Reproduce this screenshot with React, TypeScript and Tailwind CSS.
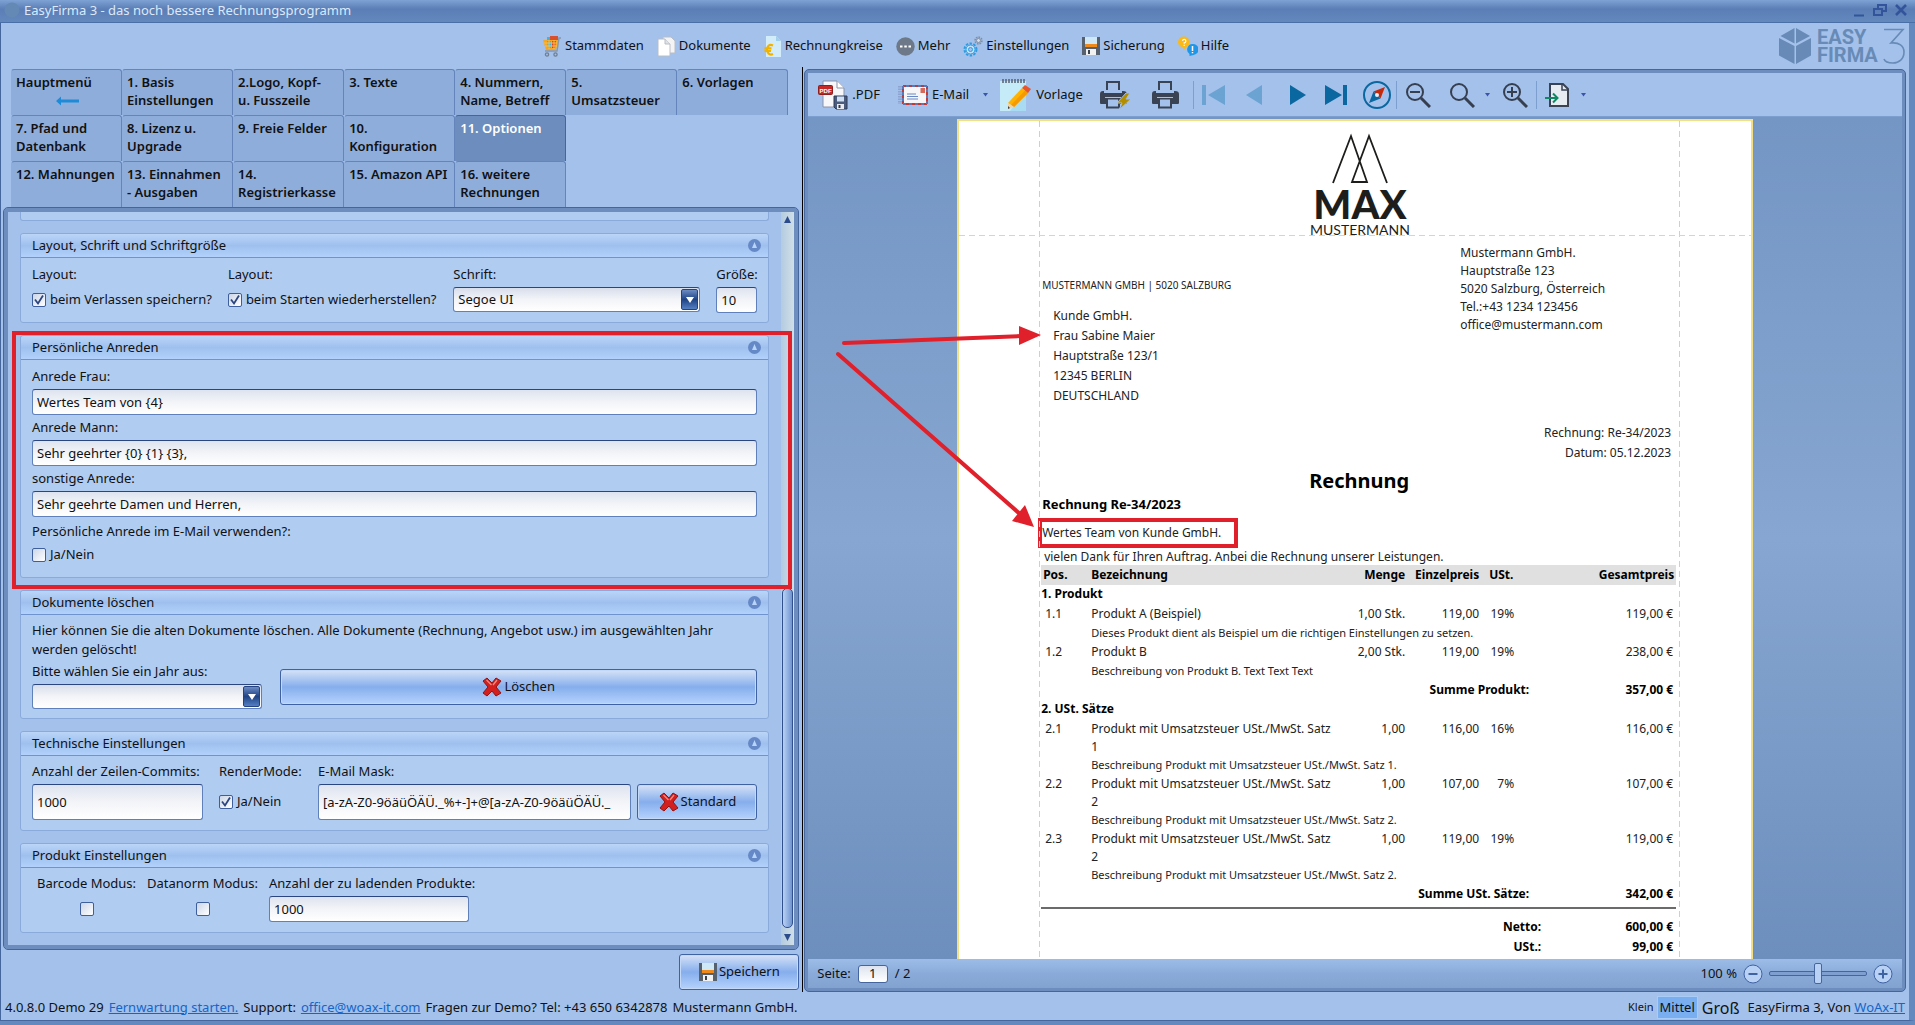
import { useId, useState } from "react";
import type { ReactNode } from "react";

const TAB_ROWS = [
  ["Hauptmenü", "1. Basis Einstellungen", "2.Logo, Kopf-\nu. Fusszeile", "3. Texte", "4. Nummern, Name, Betreff", "5.\nUmsatzsteuer", "6. Vorlagen"],
  ["7. Pfad und Datenbank", "8. Lizenz u. Upgrade", "9. Freie Felder", "10. Konfiguration", "11. Optionen"],
  ["12. Mahnungen", "13. Einnahmen\n- Ausgaben", "14. Registrierkasse", "15. Amazon API", "16. weitere Rechnungen"],
];

type Item = { pos: string; name: string; qty: string; price: string; tax: string; total: string; text: string };
type Group = { title: string; items: Item[]; sumLabel: string; sum: string };

const GROUPS: Group[] = [
  {
    title: "1. Produkt",
    items: [
      { pos: "1.1", name: "Produkt A (Beispiel)", qty: "1,00 Stk.", price: "119,00", tax: "19%", total: "119,00 €", text: "Dieses Produkt dient als Beispiel um die richtigen Einstellungen zu setzen." },
      { pos: "1.2", name: "Produkt B", qty: "2,00 Stk.", price: "119,00", tax: "19%", total: "238,00 €", text: "Beschreibung von Produkt B. Text Text Text" },
    ],
    sumLabel: "Summe Produkt:",
    sum: "357,00 €",
  },
  {
    title: "2. USt. Sätze",
    items: [
      { pos: "2.1", name: "Produkt mit Umsatzsteuer USt./MwSt. Satz 1", qty: "1,00", price: "116,00", tax: "16%", total: "116,00 €", text: "Beschreibung Produkt mit Umsatzsteuer USt./MwSt. Satz 1." },
      { pos: "2.2", name: "Produkt mit Umsatzsteuer USt./MwSt. Satz 2", qty: "1,00", price: "107,00", tax: "7%", total: "107,00 €", text: "Beschreibung Produkt mit Umsatzsteuer USt./MwSt. Satz 2." },
      { pos: "2.3", name: "Produkt mit Umsatzsteuer USt./MwSt. Satz 2", qty: "1,00", price: "119,00", tax: "19%", total: "119,00 €", text: "Beschreibung Produkt mit Umsatzsteuer USt./MwSt. Satz 2." },
    ],
    sumLabel: "Summe USt. Sätze:",
    sum: "342,00 €",
  },
];

/* ---------- icons ---------- */

function CartIcon() {
  return (
    <svg width="20" height="21" viewBox="0 0 20 21">
      <path d="M5 1h7v4H5z" fill="#3fb2e6" />
      <path d="M8 0h8v4H8z" fill="#d9502e" />
      <path d="M1 4h15l-2 10H4z" fill="#f5a623" />
      <path d="M5 5h4v7H6z" fill="#3fb2e6" />
      <path d="M10 5h4l-1 7h-3z" fill="#d9421e" />
      <path d="M2 7h13M3 10h12M7 4v9M12 4v9" stroke="#fbc04a" strokeWidth="1" />
      <path d="M19 2h-2l-2 13H3" fill="none" stroke="#8a97a6" strokeWidth="1.4" />
      <circle cx="5" cy="18.500" r="1.600" fill="none" stroke="#6f7f90" strokeWidth="1.3" />
      <circle cx="13.500" cy="18.500" r="1.600" fill="none" stroke="#6f7f90" strokeWidth="1.3" />
    </svg>
  );
}

function DocsIcon() {
  return (
    <svg width="19" height="21" viewBox="0 0 19 21">
      <path d="M6 1h8l4 4v12H6z" fill="#f4f4f4" stroke="#b9bec6" />
      <path d="M1 3h7l5 5v12H1z" fill="#fff" stroke="#b9bec6" />
      <path d="M8 3v5h5" fill="#dfe3e8" stroke="#b9bec6" />
    </svg>
  );
}

function EuroDocIcon() {
  return (
    <svg width="18" height="21" viewBox="0 0 18 21">
      <path d="M2 0h10l5 5v16H2z" fill="#d3ecfa" />
      <path d="M12 0v5h5z" fill="#9fd0ee" />
      <path d="M9 9.500C5 7.500 3 11 3 13.500S5 20 9 18M0.500 12.300h7M0.500 15h6.500" fill="none" stroke="#f2b300" strokeWidth="2.200" />
    </svg>
  );
}

function MoreIcon() {
  return (
    <svg width="19" height="19" viewBox="0 0 19 19">
      <circle cx="9.500" cy="9.500" r="9.200" fill="#6d7988" />
      <path d="M4 8.500h2.500v2H4zM8.300 8.500h2.500v2H8.300zM12.500 8.500H15v2h-2.500z" fill="#fff" />
    </svg>
  );
}

function GearsIcon() {
  return (
    <svg width="20" height="21" viewBox="0 0 20 21" fill="none">
      <circle cx="7.500" cy="13.500" r="6" stroke="#2f9be0" strokeWidth="2" strokeDasharray="2.400 1.400" />
      <circle cx="7.500" cy="13.500" r="4.500" fill="#bfe2fa" stroke="#2f9be0" />
      <circle cx="7.500" cy="13.500" r="2" fill="#a3c1eb" stroke="#2f9be0" />
      <circle cx="15.500" cy="4.500" r="3.400" stroke="#7f8ea3" strokeWidth="1.600" strokeDasharray="1.600 1" />
      <circle cx="15.500" cy="4.500" r="2" fill="#d5dce6" stroke="#7f8ea3" />
    </svg>
  );
}

function FloppyIcon() {
  return (
    <svg width="18" height="20" viewBox="0 0 18 20">
      <path d="M0 1h18v18H0z" fill="#56616d" />
      <path d="M3 1h12v8H3z" fill="#cfe8f7" />
      <path d="M3 8h12v3H3z" fill="#ee8a1d" />
      <path d="M4 13h10v6H4z" fill="#f2f2f2" />
      <path d="M6 14h2v4H6z" fill="#3a434d" />
    </svg>
  );
}

function HelpIcon() {
  return (
    <svg width="20" height="20" viewBox="0 0 20 20">
      <path d="M6 0.500a5.500 5.500 0 0 1 2 10.600L5 15v-3.500A5.500 5.500 0 0 1 6 0.500z" fill="#fbb917" />
      <path d="M4.500 4.800a1.700 1.700 0 1 1 1.700 2v1M6.200 8.800v1.200" stroke="#fff" strokeWidth="1.200" fill="none" />
      <path d="M14.500 8a5.500 5.500 0 0 1 1 11l-4 1v-2A5.500 5.500 0 0 1 14.500 8z" fill="#1f97e6" />
      <path d="M14.500 10v5M14.500 16v1.300" stroke="#fff" strokeWidth="1.500" />
    </svg>
  );
}

function EasyFirmaLogo() {
  return (
    <div className="flex items-center gap-1.5 text-[#678bb6]" role="img" aria-label="Easy Firma 3">
      <svg width="32" height="36" viewBox="0 0 32 36" fill="currentColor">
        <path d="M15.500 0v15.500L1.500 8zM17 0v15.500L31 8zM0 10l15.500 8v18L0 27.500zM32 10l-15 8v18l15-8.500z" />
      </svg>
      <svg width="88" height="42" viewBox="0 0 88 42" fill="currentColor" fontFamily="Roboto, sans-serif">
        <text x="0" y="19" fontSize="20" fontWeight="700">EASY</text>
        <text x="0" y="37" fontSize="20" fontWeight="700">FIRMA</text>
        <path d="M67 4.500h19L74 18c8-1 13 3 13 9 0 7-5 11-11 11-5 0-8-1-9-4" fill="none" stroke="currentColor" strokeWidth="1.600" />
      </svg>
    </div>
  );
}

function RedCross() {
  return (
    <svg width="20" height="20" viewBox="0 0 20 20">
      <path d="M5 1l5 5 4-5 5 3-5 6 5 6-5 3-4-5-5 5-4-3 5-6-5-6z" fill="#d3201f" stroke="#8d1414" strokeLinejoin="round" />
      <path d="M4.500 3l5 5M15 3l-4 5" stroke="#f08a80" strokeWidth="1.300" />
    </svg>
  );
}

function PdfIcon() {
  return (
    <svg width="30" height="30" viewBox="0 0 30 30">
      <path d="M5 1h14l7 7v19H5z" fill="#f7f7fa" stroke="#8c93a8" />
      <path d="M19 1v7h7" fill="#fff" stroke="#8c93a8" />
      <rect x="0.500" y="5.500" width="14" height="9" rx="1" fill="#c62828" stroke="#8f1d1d" />
      <text x="1.600" y="12.500" fontSize="6" fontWeight="700" fill="#fff" fontFamily="Liberation Sans, sans-serif">PDF</text>
      <path d="M16 16h13v13H18l-2-2z" fill="#4a5b7d" stroke="#2c3a57" />
      <path d="M19 16.500h7v5h-7z" fill="#cfe0f4" />
      <path d="M19 24h7v5h-7z" fill="#e9e9ee" />
      <path d="M20.500 25h2v3h-2z" fill="#2c3a57" />
    </svg>
  );
}

function MailIcon() {
  return (
    <svg width="30" height="22" viewBox="0 0 30 22">
      <path d="M1 2v18M3 2v18" stroke="#7587b5" strokeWidth="1" strokeDasharray="1.500 1" />
      <path d="M5 2h24v18H5z" fill="#f8f8fa" stroke="#c23a35" strokeWidth="2" strokeDasharray="3 3" />
      <path d="M5 2h24v18H5z" fill="none" stroke="#5a78b8" strokeWidth="2" strokeDasharray="3 3" strokeDashoffset="3" />
      <path d="M6 3h22v16H6z" fill="#f6f5f7" />
      <path d="M22.500 4h4.500v5h-4.500z" fill="#d8695a" />
      <path d="M9 10h9M9 12.500h11M9 15h11" stroke="#6a88c4" />
    </svg>
  );
}

function NotepadIcon() {
  return (
    <svg width="32" height="32" viewBox="0 0 32 32">
      <path d="M0 2h26v30H0z" fill="#c5ebf9" />
      <path d="M26 10v22H10z" fill="#a9dcf2" />
      <path d="M3 0v4M6 0v4M9 0v4M12 0v4M15 0v4M18 0v4M21 0v4M24 0v4" stroke="#56616d" strokeWidth="1.500" />
      <path d="M22 9l6 5L14 28l-6-4z" fill="#ffb300" />
      <path d="M25 11.500l3 2.500L14 28l-3-2z" fill="#f79a00" />
      <path d="M25 6l6 4-3 4-6-5z" fill="#e8542c" />
      <path d="M8 24l6 4-6 2z" fill="#f3d3a2" />
      <path d="M8 27l2 2-2 1z" fill="#37424e" />
    </svg>
  );
}

function PrinterIcon({ flash }: { flash?: boolean }) {
  return (
    <svg width="32" height="30" viewBox="0 0 32 30">
      <path d="M8 10V2h12v8" fill="none" stroke="#3a4354" strokeWidth="2" />
      <path d="M1 14q0-3 3-3h1v2h18v-2h1q4 0 4 3v9q0 1-1 1H2q-1 0-1-1z" fill="#3a4354" />
      <path d="M8 18.500h12v9H8z" fill="#a3c1eb" stroke="#3a4354" strokeWidth="2" />
      <path d="M6 17.500h16" stroke="#a3c1eb" />
      {flash && <path d="M27 13l-9 10h5l-3 7 12-11h-5l4-6z" fill="#b38f00" stroke="#a3c1eb" />}
    </svg>
  );
}

function CompassIcon() {
  return (
    <svg width="30" height="30" viewBox="0 0 30 30">
      <circle cx="15" cy="15" r="13" fill="none" stroke="#0a679f" strokeWidth="2" />
      <path d="M23 7l-4.500 11.500-7-7z" fill="#c4290a" />
      <path d="M7 23l4.500-11.500 7 7z" fill="#0a679f" />
      <circle cx="15" cy="15" r="2" fill="#e8eef8" />
    </svg>
  );
}

function LensIcon({ children }: { children?: ReactNode }) {
  return (
    <svg width="26" height="26" viewBox="0 0 26 26" fill="none" stroke="#363f50">
      <circle cx="10" cy="10" r="8" strokeWidth="2" />
      {children}
      <path d="M16 16l9 9" strokeWidth="3" />
    </svg>
  );
}

function ExportIcon() {
  return (
    <svg width="26" height="26" viewBox="0 0 26 26" fill="none">
      <path d="M5 2h13l5 5v17H5z" fill="#e7ebf2" stroke="#3a4354" strokeWidth="2" />
      <path d="M17 2v6h6" stroke="#3a4354" strokeWidth="1.500" />
      <path d="M0 16h12M8 11.500l4.500 4.500L8 20.500" stroke="#0d8a62" strokeWidth="2" />
    </svg>
  );
}

function Caret() {
  return (
    <svg width="5" height="4" viewBox="0 0 5 4" className="shrink-0">
      <path d="M0 0h5L2.500 3.500z" fill="#3a55a8" />
    </svg>
  );
}

/* ---------- form parts ---------- */

function Panel({ title, children }: { title: string; children: ReactNode }) {
  return (
    <section className="rounded-[3px] border border-[#8aaadb] bg-[#b0ccf1]">
      <header className="flex h-6 items-center justify-between rounded-t-[3px] border-b border-[#6f93cf] bg-linear-to-b from-[#bbd5f8] from-0% via-[#9fc0ee] via-50% to-[#b2d1fc] to-100% pr-[7px] pl-[11px]">
        <h2>{title}</h2>
        <button type="button" aria-label="Einklappen">
          <svg width="13" height="13" viewBox="0 0 13 13">
            <circle cx="6.500" cy="6.500" r="6.500" fill="#6589c6" />
            <path d="M6.500 3l2.500 6H4z" fill="#b9d4f9" />
          </svg>
        </button>
      </header>
      <div className="px-[11px]">{children}</div>
    </section>
  );
}

function Field({ label, value, height = "h-[26px]", width = "w-full" }: { label: string; value: string; height?: string; width?: string }) {
  const id = useId();
  return (
    <div className={`flex flex-col ${width}`}>
      <label htmlFor={id} className="leading-[25px] whitespace-nowrap">{label}</label>
      <input
        id={id}
        defaultValue={value}
        className={`w-full rounded-[3px] border border-[#5f80b8] border-t-[#2b4580] bg-linear-to-b from-[#dde3ef] via-[#f3f4f8] to-white px-1 ${height}`}
      />
    </div>
  );
}

function Check({ label, checked, hideLabel }: { label: string; checked?: boolean; hideLabel?: boolean }) {
  return (
    <label className="flex items-center gap-1 whitespace-nowrap">
      <span className="relative flex size-[14px]">
        <input
          type="checkbox"
          defaultChecked={checked}
          aria-label={label}
          className="peer size-[14px] appearance-none rounded-[2px] border border-[#3f5f9c] bg-linear-to-br from-[#ccd6e8] to-white"
        />
        <svg viewBox="0 0 14 14" className="pointer-events-none absolute inset-0 hidden peer-checked:block" fill="none" stroke="#2b4580" strokeWidth="1.800">
          <path d="M3 6.500l3 4 5-8" />
        </svg>
      </span>
      {!hideLabel && label}
    </label>
  );
}

function Dropdown({ label, options, width }: { label: string; options: string[]; width: string }) {
  const id = useId();
  return (
    <div className={`flex flex-col ${width}`}>
      <label htmlFor={id} className="leading-[25px] whitespace-nowrap">{label}</label>
      <div className="relative">
        <select
          id={id}
          className="block h-[25px] w-full appearance-none rounded-[3px] border border-[#5f80b8] border-t-[#2b4580] bg-linear-to-b from-[#d7deeb] via-[#f3f4f8] to-white px-1"
        >
          {options.map((option) => (
            <option key={option}>{option}</option>
          ))}
        </select>
        <span className="pointer-events-none absolute top-0.5 right-0.5 flex h-[21px] w-[17px] items-center justify-center rounded-[2px] border border-[#24427f] bg-linear-to-b from-[#6c8cc4] via-[#1f4384] to-[#5580c4]">
          <svg width="8" height="6" viewBox="0 0 8 6">
            <path d="M0 0h8L4 6z" fill="#fff" />
          </svg>
        </span>
      </div>
    </div>
  );
}

function PushButton({ icon, label, className }: { icon: ReactNode; label: string; className: string }) {
  return (
    <button
      type="button"
      className={`flex h-9 items-center justify-center gap-0.5 rounded-[3px] border border-[#3f62a3] bg-linear-to-b from-[#d6e2f6] from-0% via-[#86aeec] via-50% to-[#b5d2fd] to-100% shadow-[inset_0_0_0_1px_#c4d8f7] ${className}`}
    >
      {icon}
      {label}
    </button>
  );
}

/* ---------- window parts ---------- */

function TitleBar() {
  return (
    <header className="flex h-[23px] shrink-0 items-center bg-linear-to-b from-[#7fa2d4] from-0% via-[#5a7eb5] via-40% to-[#6489bf] to-100% px-1 pb-1 shadow-[inset_0_-1px_0_#4a6ea6]">
      <svg width="16" height="16" viewBox="0 0 16 16" fill="#6489b5">
        <circle cx="8" cy="8" r="7.500" />
      </svg>
      <h1 className="ml-1 flex-1 text-[13px] leading-[18px] text-[#dce9fb]">EasyFirma 3 - das noch bessere Rechnungsprogramm</h1>
      <div className="flex items-center gap-2 pr-1">
        <button type="button" aria-label="Minimieren">
          <svg width="12" height="14" viewBox="0 0 12 14"><path d="M1 12.500h10" stroke="#33539b" strokeWidth="2" /></svg>
        </button>
        <button type="button" aria-label="Verkleinern">
          <svg width="14" height="14" viewBox="0 0 14 14" fill="none" stroke="#33539b" strokeWidth="2">
            <path d="M5 5V2h8v6h-3M1 6h8v6H1z" />
          </svg>
        </button>
        <button type="button" aria-label="Schließen">
          <svg width="12" height="14" viewBox="0 0 12 14"><path d="M1 2l10 10M11 2L1 12" stroke="#33539b" strokeWidth="2.600" /></svg>
        </button>
      </div>
    </header>
  );
}

function MainMenu() {
  const items: [string, ReactNode][] = [
    ["Stammdaten", <CartIcon />],
    ["Dokumente", <DocsIcon />],
    ["Rechnungkreise", <EuroDocIcon />],
    ["Mehr", <MoreIcon />],
    ["Einstellungen", <GearsIcon />],
    ["Sicherung", <FloppyIcon />],
    ["Hilfe", <HelpIcon />],
  ];
  return (
    <nav className="grid h-[44px] shrink-0 grid-cols-[1fr_auto_1fr] items-center px-1 pt-0.5">
      <span />
      <div className="flex items-center gap-[13px] pr-[139px]">
        {items.map(([label, icon]) => (
          <button key={label} type="button" className="flex items-center gap-[3px] whitespace-nowrap">
            {icon}
            {label}
          </button>
        ))}
      </div>
      <div className="flex justify-end">
        <EasyFirmaLogo />
      </div>
    </nav>
  );
}

function Tabs() {
  const [active, setActive] = useState("11. Optionen");
  return (
    <nav className="mr-[14px] ml-2.5">
      {TAB_ROWS.map((row) => (
        <div key={row[0]} className="grid grid-cols-7">
          {row.map((tab) => (
            <button
              key={tab}
              type="button"
              onClick={() => setActive(tab)}
              className={`flex h-[46px] flex-col items-start rounded-t-[3px] border-t border-r border-l border-l-transparent pt-[3px] pl-1 text-left leading-[18px] font-semibold whitespace-pre-line ${
                active === tab ? "border-[#45659d] bg-[#6c8dbd] text-white" : "border-[#6485bb] bg-[#8eaddb]"
              }`}
            >
              {tab}
              {tab === "Hauptmenü" && (
                <svg width="24" height="12" viewBox="0 0 24 12" className="mt-1 ml-10">
                  <path d="M0 6l5-4.500v3h18v3H5v3z" fill="#1d8bd8" />
                </svg>
              )}
            </button>
          ))}
        </div>
      ))}
    </nav>
  );
}

function Options() {
  return (
    <div className="relative mr-[3px] ml-0.5 flex min-h-0 flex-1 overflow-hidden rounded-[5px] border border-[#45659d] bg-[#a3c1eb] shadow-[inset_0_0_0_4px_#6c8dbd]">
      <div className="m-1 flex min-w-0 flex-1">
        <div className="flex min-w-0 flex-1 flex-col gap-3 overflow-hidden px-3">
          <div className="h-[9px] shrink-0 rounded-b-[3px] border border-t-0 border-[#8aaadb] bg-[#b0ccf1]" />

          <Panel title="Layout, Schrift und Schriftgröße">
            <div className="flex h-16 items-start gap-4 pt-1">
              <div className="flex flex-col">
                <span className="leading-[25px]">Layout:</span>
                <div className="flex h-[26px] items-center"><Check label="beim Verlassen speichern?" checked /></div>
              </div>
              <div className="flex flex-1 flex-col">
                <span className="leading-[25px]">Layout:</span>
                <div className="flex h-[26px] items-center"><Check label="beim Starten wiederherstellen?" checked /></div>
              </div>
              <Dropdown label="Schrift:" options={["Segoe UI"]} width="w-[247px]" />
              <Field label="Größe:" value="10" width="w-[41px]" />
            </div>
          </Panel>

          <Panel title="Persönliche Anreden">
            <div className="flex h-[217px] flex-col pt-1">
              <Field label="Anrede Frau:" value="Wertes Team von {4}" />
              <Field label="Anrede Mann:" value="Sehr geehrter {0} {1} {3}," />
              <Field label="sonstige Anrede:" value="Sehr geehrte Damen und Herren," />
              <span className="leading-[28px]">Persönliche Anrede im E-Mail verwenden?:</span>
              <Check label="Ja/Nein" />
            </div>
          </Panel>

          <Panel title="Dokumente löschen">
            <div className="flex h-[103px] flex-col pt-1.5">
              <p className="leading-[19px]">
                Hier können Sie die alten Dokumente löschen. Alle Dokumente (Rechnung, Angebot usw.) im ausgewählten Jahr
                werden gelöscht!
              </p>
              <div className="flex items-center gap-[18px]">
                <Dropdown label="Bitte wählen Sie ein Jahr aus:" options={[""]} width="w-[230px]" />
                <PushButton icon={<RedCross />} label="Löschen" className="mt-1.5 flex-1" />
              </div>
            </div>
          </Panel>

          <Panel title="Technische Einstellungen">
            <div className="flex h-[74px] items-start pt-[3px]">
              <Field label="Anzahl der Zeilen-Commits:" value="1000" height="h-9" width="w-[171px]" />
              <div className="ml-4 flex w-[99px] flex-col">
                <span className="leading-[25px]">RenderMode:</span>
                <div className="flex h-9 items-center"><Check label="Ja/Nein" checked /></div>
              </div>
              <div className="flex min-w-0 flex-1 items-end gap-1.5">
                <Field label="E-Mail Mask:" value="[a-zA-Z0-9öäüÖÄÜ._%+-]+@[a-zA-Z0-9öäüÖÄÜ._" height="h-9" width="flex-1" />
                <PushButton icon={<RedCross />} label="Standard" className="w-[120px]" />
              </div>
            </div>
          </Panel>

          <Panel title="Produkt Einstellungen">
            <div className="flex h-16 items-start gap-[11px] pt-[3px] pl-[5px]">
              <div className="flex flex-col items-center">
                <span className="leading-[25px]">Barcode Modus:</span>
                <div className="flex h-[26px] items-center"><Check label="Barcode Modus" hideLabel /></div>
              </div>
              <div className="flex flex-col items-center">
                <span className="leading-[25px]">Datanorm Modus:</span>
                <div className="flex h-[26px] items-center"><Check label="Datanorm Modus" hideLabel /></div>
              </div>
              <Field label="Anzahl der zu ladenden Produkte:" value="1000" width="w-[200px]" />
            </div>
          </Panel>
        </div>

        <div className="flex w-[13px] flex-col items-center bg-linear-to-r from-[#b4cbe0] to-[#d0dfe8] py-1">
          <svg width="7" height="7" viewBox="0 0 7 7"><path d="M3.500 0L7 7H0z" fill="#2b4b8c" /></svg>
          <div className="flex-1" />
          <div className="h-[340px] w-[11px] rounded-[5px] border border-[#2f4f8f] bg-linear-to-r from-[#b9d1f5] to-[#6f94cf]" />
          <svg width="7" height="7" viewBox="0 0 7 7" className="mt-1.5"><path d="M0 0h7L3.500 7z" fill="#2b4b8c" /></svg>
        </div>
      </div>
      {/* marks the salutation group */}
      <div className="pointer-events-none absolute top-[123px] right-1.5 left-2 h-[258px] border-4 border-[#e0202a]" />
    </div>
  );
}

function PreviewToolbar() {
  return (
    <div className="flex h-11 shrink-0 items-center border-b border-[#7d9fd0] bg-[#a3c1eb] pl-2.5">
      <button type="button" className="flex items-center gap-1"><PdfIcon />.PDF</button>
      <button type="button" className="ml-[18px] flex items-center gap-1"><MailIcon />E-Mail<span className="ml-2.5"><Caret /></span></button>
      <button type="button" className="ml-3 flex items-center gap-1"><NotepadIcon />Vorlage</button>
      <button type="button" aria-label="Schnelldruck" className="ml-4"><PrinterIcon flash /></button>
      <button type="button" aria-label="Drucken" className="ml-5"><PrinterIcon /></button>
      <div className="ml-2.5 h-7 w-px bg-[#7d9fd0]" />
      <div className="ml-2 flex items-center gap-4">
        <button type="button" aria-label="Erste Seite">
          <svg width="24" height="20" viewBox="0 0 24 20" fill="#6ba3d2"><path d="M0 0h4v20H0zM23 0v20L6 10z" /></svg>
        </button>
        <button type="button" aria-label="Vorige Seite">
          <svg width="24" height="20" viewBox="0 0 24 20" fill="#6ba3d2"><path d="M20 0v20L4 10z" /></svg>
        </button>
      </div>
      <div className="ml-5 flex items-center gap-[14px]">
        <button type="button" aria-label="Nächste Seite">
          <svg width="24" height="20" viewBox="0 0 24 20" fill="#0a679f"><path d="M4 0v20l16-10z" /></svg>
        </button>
        <button type="button" aria-label="Letzte Seite">
          <svg width="24" height="20" viewBox="0 0 24 20" fill="#0a679f"><path d="M1 0v20l17-10zM19 0h4v20h-4z" /></svg>
        </button>
        <button type="button" aria-label="Navigation"><CompassIcon /></button>
      </div>
      <div className="ml-1 h-7 w-px bg-[#7d9fd0]" />
      <div className="ml-2 flex items-center gap-[18px]">
        <button type="button" aria-label="Verkleinern"><LensIcon><path d="M5 10h10" strokeWidth="2" /></LensIcon></button>
        <button type="button" aria-label="Zoom" className="flex items-center gap-2.5"><LensIcon /><Caret /></button>
      </div>
      <button type="button" aria-label="Vergrößern" className="ml-3"><LensIcon><path d="M5 10h10M10 5v10" strokeWidth="2" /></LensIcon></button>
      <div className="ml-2 h-7 w-px bg-[#7d9fd0]" />
      <button type="button" aria-label="Exportieren" className="ml-2 flex items-center gap-2.5"><ExportIcon /><Caret /></button>
    </div>
  );
}

function PositionTable() {
  return (
    <table className="w-[635px] table-fixed border-collapse text-[12px] text-[#222]">
      <colgroup>
        <col className="w-[50px]" />
        <col className="w-[254px]" />
        <col className="w-[60px]" />
        <col className="w-[74px]" />
        <col className="w-[50px]" />
        <col className="w-[147px]" />
      </colgroup>
      <thead>
        <tr className="h-5 bg-[#e0e0e0] text-black">
          <th className="pl-0.5 text-left">Pos.</th>
          <th className="text-left">Bezeichnung</th>
          <th className="text-right">Menge</th>
          <th className="text-right">Einzelpreis</th>
          <th className="pl-2.5 text-left">USt.</th>
          <th className="pr-0.5 text-right">Gesamtpreis</th>
        </tr>
      </thead>
      {GROUPS.map((group) => (
        <tbody key={group.title} className="align-top leading-[18px]">
          <tr className="h-5 font-bold text-black">
            <td colSpan={6}>{group.title}</td>
          </tr>
          {group.items.map((item) => (
            <ItemRows key={item.pos} item={item} />
          ))}
          <tr className="h-[19px] font-bold text-black">
            <td colSpan={5} className="text-right">{group.sumLabel}</td>
            <td className="pr-[3px] text-right">{group.sum}</td>
          </tr>
        </tbody>
      ))}
    </table>
  );
}

function ItemRows({ item }: { item: Item }) {
  return (
    <>
      <tr className="h-[19px]">
        <td className="pl-1">{item.pos}</td>
        <td className="pr-2">{item.name}</td>
        <td className="text-right whitespace-nowrap">{item.qty}</td>
        <td className="text-right">{item.price}</td>
        <td className="pr-[15px] text-right">{item.tax}</td>
        <td className="pr-[3px] text-right">{item.total}</td>
      </tr>
      <tr className="h-[19px]">
        <td />
        <td colSpan={4} className="text-[11px]">{item.text}</td>
        <td />
      </tr>
    </>
  );
}

function Paper() {
  return (
    <article className="relative mx-auto mt-0.5 w-[796px] shrink-0 border-2 border-[#f3df84] bg-white pb-20 pl-[82px] text-[12px] text-[#222]">
      {/* margin guides */}
      <div className="pointer-events-none absolute inset-y-0 left-20 w-px bg-[repeating-linear-gradient(to_bottom,#cfcfcf_0_6px,transparent_6px_10px)]" />
      <div className="pointer-events-none absolute inset-y-0 right-[71px] w-px bg-[repeating-linear-gradient(to_bottom,#cfcfcf_0_6px,transparent_6px_10px)]" />
      <div className="pointer-events-none absolute inset-x-0 top-[114px] h-px bg-[repeating-linear-gradient(to_right,#d4d4d4_0_6px,transparent_6px_10px)]" />

      <div className="flex h-[123px] w-[638px] justify-center pt-3">
        <svg width="120" height="108" viewBox="0 0 120 108" fill="#1d1d1b" role="img" aria-label="Max Mustermann">
          <path d="M33 50L51 3l16 46H52L69 3l18 47" fill="none" stroke="#1d1d1b" strokeWidth="1.800" />
          <text x="60" y="86" fontSize="40" fontWeight="900" textAnchor="middle" fontFamily="Lato, sans-serif">MAX</text>
          <text x="60" y="102" fontSize="14" textAnchor="middle" fontFamily="Lato, sans-serif">MUSTERMANN</text>
        </svg>
      </div>

      <div className="flex h-[172px]">
        <div className="w-[419px] pt-[33px]">
          <p className="pl-px text-[10px] leading-4">MUSTERMANN GMBH | 5020 SALZBURG</p>
          <address className="mt-[13px] pl-3 leading-5 not-italic">
            Kunde GmbH.<br />
            Frau Sabine Maier<br />
            Hauptstraße 123/1<br />
            12345 BERLIN<br />
            DEUTSCHLAND
          </address>
        </div>
        <address className="leading-[18px] not-italic">
          Mustermann GmbH.<br />
          Hauptstraße 123<br />
          5020 Salzburg, Österreich<br />
          Tel.:+43 1234 123456<br />
          office@mustermann.com
        </address>
      </div>

      <div className="flex w-[630px] flex-col items-end pt-[7px] leading-5">
        <p>Rechnung: Re-34/2023</p>
        <p>Datum: 05.12.2023</p>
      </div>
      <h2 className="mt-1 w-[636px] text-center text-[20px] leading-[28px] font-bold text-black">Rechnung</h2>
      <h3 className="pl-px text-[13px] leading-[18px] font-bold text-black">Rechnung Re-34/2023</h3>
      <p className="mt-[5px] -ml-[3px] flex h-[30px] w-[200px] items-center border-4 border-[#e0202a] leading-5 whitespace-nowrap">Wertes Team von Kunde GmbH.</p>
      <p className="pl-[3px] leading-[17px]">vielen Dank für Ihren Auftrag. Anbei die Rechnung unserer Leistungen.</p>
      <PositionTable />
      <div className="mt-[3px] h-0.5 w-[635px] bg-[#6b6b6b]" />
      <dl className="mt-2 grid w-[635px] grid-cols-[500px_1fr] pr-[3px] text-right leading-5 font-bold text-black">
        <dt>Netto:</dt>
        <dd>600,00 €</dd>
        <dt>USt.:</dt>
        <dd>99,00 €</dd>
      </dl>

      <svg width="210" height="210" viewBox="0 0 210 210" className="pointer-events-none absolute top-[209px] -left-[124px] overflow-visible" fill="#e0202a" stroke="#e0202a">
        <path d="M9 13l178-7" strokeWidth="4" strokeLinecap="round" />
        <path d="M184-4l22 9-22 10z" stroke="none" />
      </svg>
      <svg width="210" height="190" viewBox="0 0 210 190" className="pointer-events-none absolute top-[229px] -left-[124px]" fill="#e0202a" stroke="#e0202a">
        <path d="M3 4l182 160" strokeWidth="4" strokeLinecap="round" />
        <path d="M199 177l-22-6 13-16z" stroke="none" />
      </svg>
    </article>
  );
}

function Preview() {
  return (
    <section className="mt-0.5 mr-[3px] ml-px flex min-w-0 flex-1 flex-col rounded-[5px] border border-[#45659d] bg-[#6c8dbd] p-[3px]">
      <PreviewToolbar />
      <div className="flex min-h-0 flex-1 flex-col overflow-hidden bg-linear-to-b from-[#7496c4] via-[#87a6d1] to-[#6d8fbd]">
        <Paper />
      </div>
      <footer className="flex h-[29px] shrink-0 items-center bg-linear-to-b from-[#9dbde8] from-0% via-[#8aabd9] via-50% to-[#82a2d0] to-100% px-[9px]">
        <label htmlFor="page">Seite:</label>
        <input id="page" defaultValue="1" className="mx-[7px] h-[18px] w-[30px] rounded-[3px] border border-[#45659d] bg-linear-to-b from-[#dde3ef] to-white text-center" />
        / 2
        <span className="flex-1" />
        <label htmlFor="zoom" className="mr-1.5">100 %</label>
        <button type="button" aria-label="Zoom verkleinern">
          <svg width="20" height="20" viewBox="0 0 20 20" fill="#b9d1f5" stroke="#3f62a3"><circle cx="10" cy="10" r="9" /><path d="M5.500 10h9" strokeWidth="2" /></svg>
        </button>
        <input
          id="zoom"
          type="range"
          className="mx-1.5 h-[21px] w-[98px] appearance-none bg-transparent [&::-webkit-slider-runnable-track]:h-[5px] [&::-webkit-slider-runnable-track]:rounded-[2px] [&::-webkit-slider-runnable-track]:border [&::-webkit-slider-runnable-track]:border-[#45659d] [&::-webkit-slider-runnable-track]:bg-[#7f9fd0] [&::-webkit-slider-thumb]:-mt-[9px] [&::-webkit-slider-thumb]:h-[21px] [&::-webkit-slider-thumb]:w-2 [&::-webkit-slider-thumb]:appearance-none [&::-webkit-slider-thumb]:rounded-[2px] [&::-webkit-slider-thumb]:border [&::-webkit-slider-thumb]:border-[#45659d] [&::-webkit-slider-thumb]:bg-[#b9d1f5]"
        />
        <button type="button" aria-label="Zoom vergrößern">
          <svg width="20" height="20" viewBox="0 0 20 20" fill="#b9d1f5" stroke="#3f62a3"><circle cx="10" cy="10" r="9" /><path d="M5.500 10h9M10 5.500v9" strokeWidth="2" /></svg>
        </button>
      </footer>
    </section>
  );
}

function StatusBar() {
  return (
    <footer className="flex h-7 shrink-0 items-center justify-between px-1 pt-[3px] whitespace-nowrap">
      <p className="flex gap-[5px]">
        <span>4.0.8.0 Demo 29</span>
        <a href="#fernwartung" className="text-[#1565c8] underline">Fernwartung starten.</a>
        <span>Support:</span>
        <a href="mailto:office@woax-it.com" className="text-[#1565c8] underline">office@woax-it.com</a>
        <span>Fragen zur Demo? Tel: +43 650 6342878</span>
        <span>Mustermann GmbH.</span>
      </p>
      <div className="flex items-center">
        <button type="button" className="text-[11px]">Klein</button>
        <button type="button" className="ml-[3px] h-[23px] border border-[#a9ccf7] bg-[#79aef0] px-0.5">Mittel</button>
        <button type="button" className="ml-1 text-[16px]">Groß</button>
        <span className="ml-2">
          EasyFirma 3, Von <a href="#woax" className="text-[#1565c8] underline">WoAx-IT</a>
        </span>
      </div>
    </footer>
  );
}

export default function App() {
  return (
    <div className="flex h-screen flex-col overflow-hidden border-b-4 border-[#6489bf] bg-[#a3c1eb] font-['Noto_Sans','Open_Sans',sans-serif] text-[13px] text-[#111]">
      <TitleBar />
      <div className="flex min-h-0 flex-1 flex-col border-r-[6px] border-b border-l border-r-[#6489bf] border-b-[#45659d] border-l-[#45659d]">
        <MainMenu />
        <main className="flex min-h-0 flex-1">
          <div className="flex w-[42%] flex-col pt-0.5 pb-0.5">
            <Tabs />
            <Options />
            <div className="mt-1 flex justify-end pr-[3px]">
              <PushButton icon={<FloppyIcon />} label="Speichern" className="w-[120px]" />
            </div>
          </div>
          <div className="w-px bg-black" />
          <Preview />
        </main>
        <StatusBar />
      </div>
    </div>
  );
}
